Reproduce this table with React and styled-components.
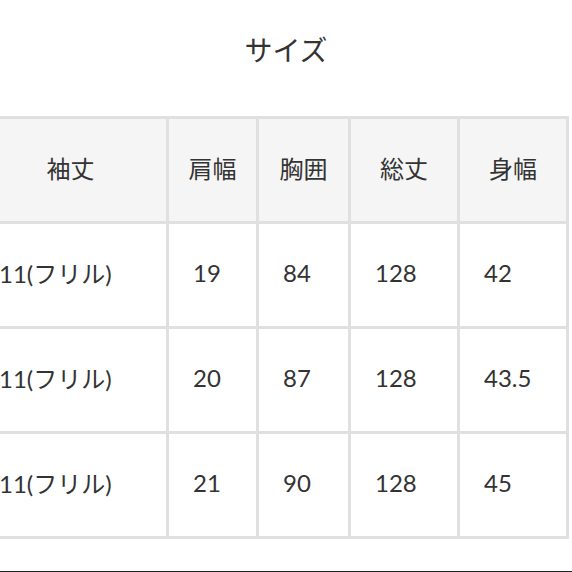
import React from 'react'
import styled, { createGlobalStyle } from 'styled-components'

const Global = createGlobalStyle`
  html, body { margin: 0; padding: 0; background: #fff; }
  body { font-family: Lato, "Noto Sans CJK JP", sans-serif; color: #333; }
`

const Page = styled.div`
  width: 572px;
  height: 572px;
  overflow: hidden;
  display: flex;
  flex-direction: column;
`

const Title = styled.h2`
  margin: 0;
  height: 116px;
  padding-top: 32px;
  box-sizing: border-box;
  text-align: center;
  font-size: 28px;
  font-weight: 400;
  line-height: 36px;
  color: #333;
`

const Table = styled.table`
  margin-left: -28px;
  width: 597px;
  table-layout: fixed;
  border-collapse: collapse;
  font-size: 24px;
`

const Cell = styled.td`
  border: 3px solid #e0e0e0;
  height: 96px;
  padding: 0 0 6px ${p => (p.$head ? 0 : 24)}px;
  text-align: ${p => (p.$head ? 'center' : 'left')};
  background: ${p => (p.$head ? '#f5f5f5' : '#fff')};
  font-weight: 400;
  color: #333;
  white-space: nowrap;
`

const BottomRule = styled.div`
  margin-top: auto;
  height: 1px;
  background: #222;
`

const widths = [194, 90, 92, 109, 109]
const heads = ['袖丈', '肩幅', '胸囲', '総丈', '身幅']
const rows = [
  ['11(フリル)', '19', '84', '128', '42'],
  ['11(フリル)', '20', '87', '128', '43.5'],
  ['11(フリル)', '21', '90', '128', '45'],
]

export default function App() {
  return (
    <Page>
      <Global />
      <Title>サイズ</Title>
      <Table>
        <colgroup>
          {widths.map((w, i) => <col key={i} style={{ width: w }} />)}
        </colgroup>
        <tbody>
          <tr>
            {heads.map(h => <Cell as="th" $head key={h}>{h}</Cell>)}
          </tr>
          {rows.map((r, i) => (
            <tr key={i}>
              {r.map((c, j) => <Cell key={j}>{c}</Cell>)}
            </tr>
          ))}
        </tbody>
      </Table>
      <BottomRule />
    </Page>
  )
}
